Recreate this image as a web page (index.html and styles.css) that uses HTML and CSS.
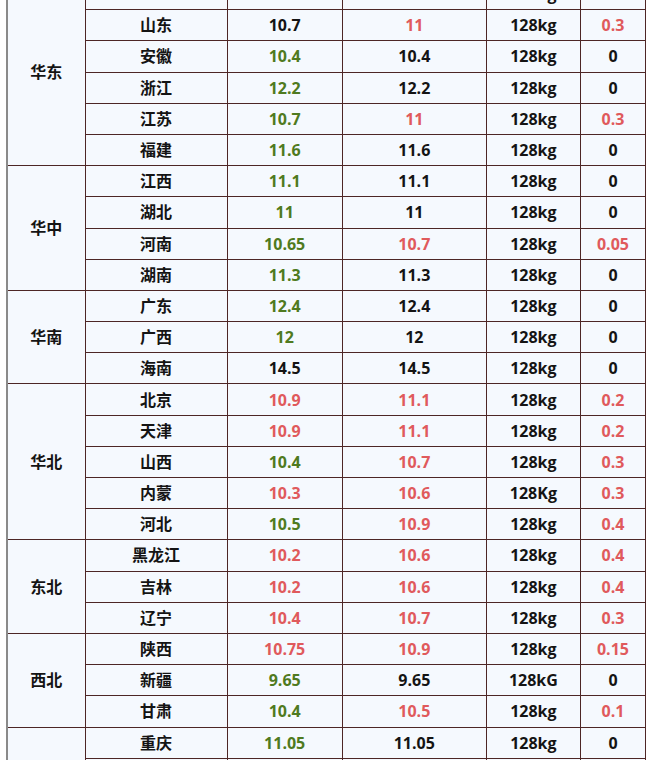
FILE: index.html
```html
<!DOCTYPE html>
<html lang="zh">
<head>
<meta charset="utf-8">
<title>价格表</title>
<link rel="stylesheet" href="styles.css">
</head>
<body>
<table class="price">
<colgroup>
<col class="c1"><col class="c2"><col class="c3"><col class="c4"><col class="c5"><col class="c6">
</colgroup>
<tbody>
<tr><td class="region" rowspan="6">华东</td><td></td><td></td><td></td><td>128kg</td><td></td></tr>
<tr><td>山东</td><td>10.7</td><td class="r">11</td><td>128kg</td><td class="r">0.3</td></tr>
<tr><td>安徽</td><td class="g">10.4</td><td>10.4</td><td>128kg</td><td>0</td></tr>
<tr><td>浙江</td><td class="g">12.2</td><td>12.2</td><td>128kg</td><td>0</td></tr>
<tr><td>江苏</td><td class="g">10.7</td><td class="r">11</td><td>128kg</td><td class="r">0.3</td></tr>
<tr><td>福建</td><td class="g">11.6</td><td>11.6</td><td>128kg</td><td>0</td></tr>

<tr><td class="region" rowspan="4">华中</td><td>江西</td><td class="g">11.1</td><td>11.1</td><td>128kg</td><td>0</td></tr>
<tr><td>湖北</td><td class="g">11</td><td>11</td><td>128kg</td><td>0</td></tr>
<tr><td>河南</td><td class="g">10.65</td><td class="r">10.7</td><td>128kg</td><td class="r">0.05</td></tr>
<tr><td>湖南</td><td class="g">11.3</td><td>11.3</td><td>128kg</td><td>0</td></tr>

<tr><td class="region" rowspan="3">华南</td><td>广东</td><td class="g">12.4</td><td>12.4</td><td>128kg</td><td>0</td></tr>
<tr><td>广西</td><td class="g">12</td><td>12</td><td>128kg</td><td>0</td></tr>
<tr><td>海南</td><td>14.5</td><td>14.5</td><td>128kg</td><td>0</td></tr>

<tr><td class="region" rowspan="5">华北</td><td>北京</td><td class="r">10.9</td><td class="r">11.1</td><td>128kg</td><td class="r">0.2</td></tr>
<tr><td>天津</td><td class="r">10.9</td><td class="r">11.1</td><td>128kg</td><td class="r">0.2</td></tr>
<tr><td>山西</td><td class="g">10.4</td><td class="r">10.7</td><td>128kg</td><td class="r">0.3</td></tr>
<tr><td>内蒙</td><td class="r">10.3</td><td class="r">10.6</td><td>128Kg</td><td class="r">0.3</td></tr>
<tr><td>河北</td><td class="g">10.5</td><td class="r">10.9</td><td>128kg</td><td class="r">0.4</td></tr>

<tr><td class="region" rowspan="3">东北</td><td>黑龙江</td><td class="r">10.2</td><td class="r">10.6</td><td>128kg</td><td class="r">0.4</td></tr>
<tr><td>吉林</td><td class="r">10.2</td><td class="r">10.6</td><td>128kg</td><td class="r">0.4</td></tr>
<tr><td>辽宁</td><td class="r">10.4</td><td class="r">10.7</td><td>128kg</td><td class="r">0.3</td></tr>

<tr><td class="region" rowspan="3">西北</td><td>陕西</td><td class="r">10.75</td><td class="r">10.9</td><td>128kg</td><td class="r">0.15</td></tr>
<tr><td>新疆</td><td class="g">9.65</td><td>9.65</td><td>128kG</td><td>0</td></tr>
<tr><td>甘肃</td><td class="g">10.4</td><td class="r">10.5</td><td>128kg</td><td class="r">0.1</td></tr>

<tr><td class="region" rowspan="5">西南</td><td>重庆</td><td class="g">11.05</td><td>11.05</td><td>128kg</td><td>0</td></tr>
<tr><td>四川</td><td class="g">11.0</td><td>11.0</td><td>128kg</td><td>0</td></tr>
<tr><td>贵州</td><td class="g">11.2</td><td>11.2</td><td>128kg</td><td>0</td></tr>
<tr><td>云南</td><td class="g">11.3</td><td>11.3</td><td>128kg</td><td>0</td></tr>
<tr><td>西藏</td><td class="g">12.0</td><td>12.0</td><td>128kg</td><td>0</td></tr>
</tbody>
</table>
</body>
</html>
```
FILE: styles.css
```css
html, body {
  margin: 0;
  padding: 0;
  background: #ffffff;
  overflow: hidden;
}

.price {
  margin: -22px 0 0 6px;
  border-collapse: collapse;
  table-layout: fixed;
  width: 640px;
  font-family: "Open Sans", "Noto Sans CJK SC", sans-serif;
  font-weight: 700;
  font-size: 16px;
  color: #141414;
  border-left: 2px solid #8a8a8a;
}

.c1 { width: 78px; }
.c2 { width: 142px; }
.c3 { width: 115px; }
.c4 { width: 144px; }
.c5 { width: 94px; }
.c6 { width: 65px; }

.price td {
  height: 30.2px;
  padding: 0;
  text-align: center;
  vertical-align: middle;
  border: 1px solid #4d2626;
  background: #f5f9fe;
  line-height: 20px;
}

.price td.region {
  border-left: 2px solid #8a8a8a;
}

.price td.g { color: #4f7a20; }
.price td.r { color: #e05a5c; }
```
